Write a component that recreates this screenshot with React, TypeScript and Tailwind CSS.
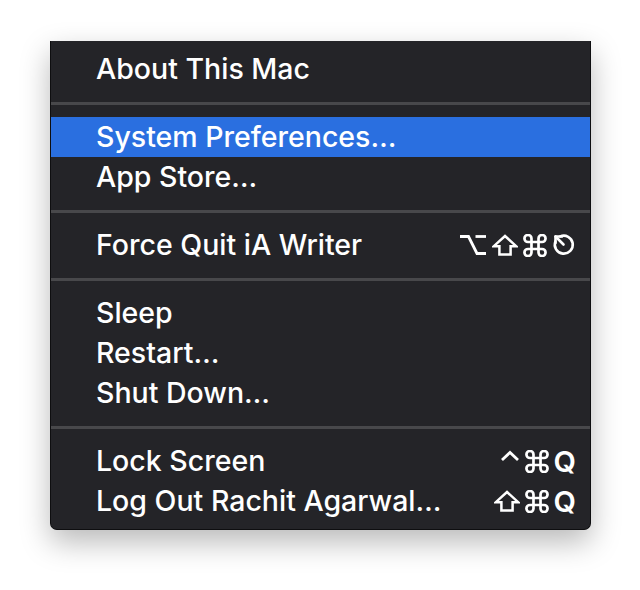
import React from 'react';

const stroke = { fill: 'none', stroke: 'white' } as const;

function OptionKey() {
  return (
    <svg width="28" height="22" viewBox="0 0 28 22" {...stroke} strokeWidth="2.8">
      <path d="M1 2.5h8.5l8.5 17h9" />
      <path d="M16.5 2.5H27" />
    </svg>
  );
}

function ShiftKey() {
  return (
    <svg width="26" height="22" viewBox="0 0 26 22" {...stroke} strokeWidth="2.5" strokeLinejoin="miter">
      <path d="M13 2 L24.2 12.2 H18.6 V20.5 H7.4 V12.2 H1.8 Z" />
    </svg>
  );
}

function CommandKey() {
  return (
    <svg width="24" height="23" viewBox="2.2 2.2 19.6 19.6" {...stroke} strokeWidth="2.3" strokeLinecap="round" strokeLinejoin="round">
      <path d="M15 6v12a3 3 0 1 0 3-3H6a3 3 0 1 0 3 3V6a3 3 0 1 0-3 3h12a3 3 0 1 0-3-3" />
    </svg>
  );
}

function ControlKey() {
  return (
    <svg width="20" height="22" viewBox="0 0 20 22" {...stroke} strokeWidth="2.8">
      <path d="M2 10 L10 2.5 L18 10" />
    </svg>
  );
}

function EscKey() {
  return (
    <svg width="24" height="24" viewBox="0 0 24 24" {...stroke} strokeWidth="2.6" strokeLinecap="round" strokeLinejoin="round">
      <path d="M8.2 3.4A9 9 0 1 1 3.4 8.4" />
      <path d="M3.5 3.5l8 8" />
      <path d="M3.5 10V3.5H10" />
    </svg>
  );
}

function QKey() {
  return <span className="text-[29px] font-semibold leading-none">Q</span>;
}

type Item = { label: string; shortcut?: React.ReactNode; active?: boolean };

const groups: Item[][] = [
  [{ label: 'About This Mac' }],
  [{ label: 'System Preferences…', active: true }, { label: 'App Store…' }],
  [
    {
      label: 'Force Quit iA Writer',
      shortcut: (
        <>
          <OptionKey />
          <ShiftKey />
          <CommandKey />
          <EscKey />
        </>
      ),
    },
  ],
  [{ label: 'Sleep' }, { label: 'Restart…' }, { label: 'Shut Down…' }],
  [
    {
      label: 'Lock Screen',
      shortcut: (
        <>
          <ControlKey />
          <CommandKey />
          <QKey />
        </>
      ),
    },
    {
      label: 'Log Out Rachit Agarwal…',
      shortcut: (
        <>
          <ShiftKey />
          <CommandKey />
          <QKey />
        </>
      ),
    },
  ],
];

export default function App() {
  return (
    <main className="w-[640px] h-[590px] bg-white pt-[41px] pl-[50px] font-['Inter','Liberation_Sans',sans-serif]">
      <div className="w-[541px] bg-[#242428] border border-[#0e0e10] border-t-0 rounded-b-[7px] pt-[8px] pb-[8px] shadow-[0_12px_30px_rgba(0,0,0,0.28)]">
        {groups.map((group, gi) => (
          <div key={gi}>
            {gi > 0 && (
              <div className="h-[28px] flex items-center">
                <div className="w-full h-[3px] bg-[#48484b]" />
              </div>
            )}
            {group.map((item) => (
              <div
                key={item.label}
                className={`h-[40px] flex items-center justify-between pl-[45px] pr-[14px] text-white ${
                  item.active ? 'bg-[#2a6fe0]' : ''
                }`}
              >
                <span className="text-[28.5px] font-medium">{item.label}</span>
                {item.shortcut && <span className="flex items-center gap-[5px]">{item.shortcut}</span>}
              </div>
            ))}
          </div>
        ))}
      </div>
    </main>
  );
}
